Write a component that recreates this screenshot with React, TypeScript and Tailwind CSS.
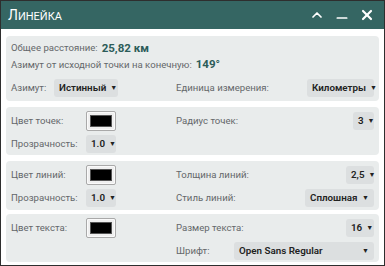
import { ChevronUp, Minus, X } from "lucide-react";

function Select({ value, className = "" }: { value: string; className?: string }) {
  return (
    <div
      className={
        "flex items-center justify-between h-[18px] px-[5px] rounded-[3px] bg-[#dcdfe0] text-[9.8px] font-semibold text-[#222] " +
        className
      }
    >
      <span>{value}</span>
      <span className="text-[7px] ml-[4px]">▼</span>
    </div>
  );
}

function Swatch() {
  return (
    <div className="w-[30px] h-[20px] border border-[#a9a9a9] bg-[#efefef] rounded-[2px] px-[3px] py-[3px] shadow-[inset_0_0_0_1px_#fafafa]">
      <div className="w-full h-full bg-black border border-[#555]" />
    </div>
  );
}

function Label({ children, className = "" }: { children: React.ReactNode; className?: string }) {
  return <span className={"text-[9.6px] text-[#64676a] " + className}>{children}</span>;
}

export default function App() {
  return (
    <div
      className="w-[385px] h-[266px] bg-white border border-[#2e2e2e] flex flex-col overflow-hidden"
      style={{ fontFamily: "Roboto, 'Liberation Sans', sans-serif" }}
    >
      {/* Header */}
      <div className="h-[28px] bg-[#356663] flex items-center justify-between pl-[7px] pr-[9px] shrink-0">
        <span className="text-white text-[14px] leading-none">
          Л<span className="uppercase text-[11px]">инейка</span>
        </span>
        <div className="flex items-center gap-[9px] text-white">
          <ChevronUp size={16} strokeWidth={2.6} />
          <Minus size={16} strokeWidth={2.6} className="mt-[6px]" />
          <X size={16} strokeWidth={3.2} />
        </div>
      </div>

      <div className="flex flex-col gap-[6px] px-[5px] pt-[7px]">
        {/* Section 1 */}
        <div className="bg-[#e9ecec] rounded-[4px] h-[65px] px-[5px] pt-[4px] flex flex-col">
          <div className="h-[17px] flex items-center">
            <Label>Общее расстояние:</Label>
            <span className="ml-[4px] text-[11.5px] font-bold text-[#2c5c59]">25,82 км</span>
          </div>
          <div className="h-[16px] flex items-center">
            <Label>Азимут от исходной точки на конечную:</Label>
            <span className="ml-[4px] text-[11.5px] font-bold text-[#2c5c59]">149°</span>
          </div>
          <div className="flex items-center mt-[6px]">
            <div className="w-[165px] flex items-center">
              <Label className="w-[43px]">Азимут:</Label>
              <Select value="Истинный" className="w-[64px]" />
            </div>
            <Label>Единица измерения:</Label>
            <Select value="Километры" className="ml-auto w-[67px]" />
          </div>
        </div>

        {/* Section 2 */}
        <div className="bg-[#e9ecec] rounded-[4px] h-[48px] px-[5px] pt-[4px] flex flex-col gap-[4px]">
          <div className="flex items-center">
            <div className="w-[165px] flex items-center">
              <Label className="w-[75px]">Цвет точек:</Label>
              <Swatch />
            </div>
            <Label>Радиус точек:</Label>
            <Select value="3" className="ml-auto w-[21px]" />
          </div>
          <div className="flex items-center">
            <Label className="w-[75px]">Прозрачность:</Label>
            <Select value="1.0" className="w-[30px]" />
          </div>
        </div>

        {/* Section 3 */}
        <div className="bg-[#e9ecec] rounded-[4px] h-[49px] px-[5px] pt-[4px] flex flex-col gap-[4px]">
          <div className="flex items-center">
            <div className="w-[165px] flex items-center">
              <Label className="w-[75px]">Цвет линий:</Label>
              <Swatch />
            </div>
            <Label>Толщина линий:</Label>
            <Select value="2,5" className="ml-auto w-[28px]" />
          </div>
          <div className="flex items-center">
            <div className="w-[165px] flex items-center">
              <Label className="w-[75px]">Прозрачность:</Label>
              <Select value="1.0" className="w-[30px]" />
            </div>
            <Label>Стиль линий:</Label>
            <Select value="Сплошная" className="ml-auto w-[69px]" />
          </div>
        </div>

        {/* Section 4 */}
        <div className="bg-[#e9ecec] rounded-[4px] h-[48px] px-[5px] pt-[4px] flex flex-col gap-[4px] mt-[-2px]">
          <div className="flex items-center">
            <div className="w-[165px] flex items-center">
              <Label className="w-[75px]">Цвет текста:</Label>
              <Swatch />
            </div>
            <Label>Размер текста:</Label>
            <Select value="16" className="ml-auto w-[28px]" />
          </div>
          <div className="flex items-center">
            <div className="w-[165px]" />
            <Label className="w-[58px]">Шрифт:</Label>
            <Select value="Open Sans Regular" className="flex-1" />
          </div>
        </div>
      </div>
    </div>
  );
}
